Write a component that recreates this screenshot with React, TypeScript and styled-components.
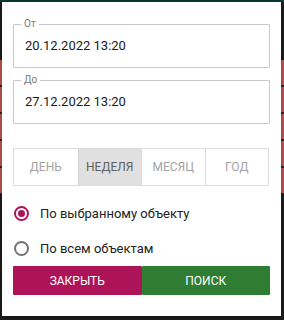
import React, { useState } from 'react';
import styled, { createGlobalStyle } from 'styled-components';

const GlobalStyle = createGlobalStyle`
    html, body {
        margin: 0;
        padding: 0;
        width: 284px;
        height: 320px;
        overflow: hidden;
    }
    * {
        box-sizing: border-box;
    }
`;

type Period = 'day' | 'week' | 'month' | 'year';
type Scope = 'selected' | 'all';

const periods: { key: Period; label: string }[] = [
    { key: 'day', label: 'День' },
    { key: 'week', label: 'Неделя' },
    { key: 'month', label: 'Месяц' },
    { key: 'year', label: 'Год' },
];

const scopes: { key: Scope; label: string }[] = [
    { key: 'selected', label: 'По выбранному объекту' },
    { key: 'all', label: 'По всем объектам' },
];

const App: React.FC = () => {
    const [period, setPeriod] = useState<Period>('week');
    const [scope, setScope] = useState<Scope>('selected');

    return (
        <>
            <GlobalStyle />
            <Backdrop>
                <Dialog>
                    <DateField>
                        <FieldLabel>От</FieldLabel>
                        <FieldValue>20.12.2022 13:20</FieldValue>
                    </DateField>
                    <DateField>
                        <FieldLabel>До</FieldLabel>
                        <FieldValue>27.12.2022 13:20</FieldValue>
                    </DateField>
                    <PeriodGroup>
                        {periods.map((p) => (
                            <PeriodButton
                                key={p.key}
                                $active={period === p.key}
                                onClick={() => setPeriod(p.key)}
                            >
                                {p.label}
                            </PeriodButton>
                        ))}
                    </PeriodGroup>
                    <RadioList>
                        {scopes.map((s) => (
                            <RadioRow key={s.key} onClick={() => setScope(s.key)}>
                                <RadioCircle $checked={scope === s.key} />
                                {s.label}
                            </RadioRow>
                        ))}
                    </RadioList>
                    <Actions>
                        <ActionButton $color="#ad1457">Закрыть</ActionButton>
                        <ActionButton $color="#2e7d32">Поиск</ActionButton>
                    </Actions>
                </Dialog>
            </Backdrop>
        </>
    );
};

export default App;

const Backdrop = styled.div`
    width: 284px;
    height: 320px;
    padding: 2px 3px 4px 2px;
    background:
        linear-gradient(#0b3b34, #0b3b34) top / 100% 2px no-repeat,
        repeating-linear-gradient(
                to bottom,
                #c65b56 0,
                #c65b56 25px,
                #2a2a2a 25px,
                #2a2a2a 27px
            )
            0 60px / 100% 134px no-repeat,
        #1e1e1e;
    font-family: Roboto, 'Noto Sans', sans-serif;
`;

const Dialog = styled.div`
    display: flex;
    flex-direction: column;
    height: 100%;
    padding: 16px 11px 0 11px;
    background-color: #ffffff;
    box-shadow: 0 2px 6px rgba(0, 0, 0, 0.4);
`;

const DateField = styled.fieldset`
    margin: 0 0 6px 0;
    padding: 0 10px 0 11px;
    height: 50px;
    border: 1px solid #c8c8c8;
    border-radius: 1px;
    min-width: 0;
`;

const FieldLabel = styled.legend`
    margin-left: -4px;
    padding: 0 3px;
    font-size: 10px;
    line-height: 12px;
    color: #7a7a7a;
`;

const FieldValue = styled.div`
    padding-top: 8px;
    font-size: 13px;
    line-height: 16px;
    color: #1a1a1a;
`;

const PeriodGroup = styled.div`
    display: grid;
    grid-template-columns: repeat(4, 1fr);
    margin-top: 18px;
    height: 38px;
    margin-right: 1px;
    border: 1px solid #dddddd;
`;

interface ActiveProps {
    $active: boolean;
}

const PeriodButton = styled.div<ActiveProps>`
    display: flex;
    align-items: center;
    justify-content: center;
    font-size: 12px;
    text-transform: uppercase;
    cursor: pointer;
    color: ${(props) => (props.$active ? '#616161' : '#a4a4a4')};
    background-color: ${(props) => (props.$active ? '#e0e0e0' : '#ffffff')};
    border-left: 1px solid ${(props) => (props.$active ? '#cfcfcf' : '#dddddd')};
    &:first-child {
        border-left: none;
    }
`;

const RadioList = styled.div`
    display: flex;
    flex-direction: column;
    gap: 13px;
    margin-top: 16px;
`;

const RadioRow = styled.label`
    display: flex;
    align-items: center;
    gap: 11px;
    height: 22px;
    font-size: 13px;
    color: #212121;
    cursor: pointer;
`;

interface CheckedProps {
    $checked: boolean;
}

const RadioCircle = styled.span<CheckedProps>`
    display: flex;
    align-items: center;
    justify-content: center;
    flex-shrink: 0;
    width: 15px;
    height: 15px;
    margin-left: 1px;
    border-radius: 50%;
    border: 2px solid ${(props) => (props.$checked ? '#ad1457' : '#757575')};
    &::after {
        content: '';
        display: ${(props) => (props.$checked ? 'block' : 'none')};
        width: 7px;
        height: 7px;
        border-radius: 50%;
        background-color: #ad1457;
    }
`;

const Actions = styled.div`
    display: grid;
    grid-template-columns: 1fr 1fr;
    margin-top: 7px;
    height: 29px;
`;

interface ColorProps {
    $color: string;
}

const ActionButton = styled.button<ColorProps>`
    border: none;
    border-radius: 1px;
    font-family: inherit;
    font-size: 12px;
    text-transform: uppercase;
    color: #ffffff;
    background-color: ${(props) => props.$color};
    cursor: pointer;
`;
